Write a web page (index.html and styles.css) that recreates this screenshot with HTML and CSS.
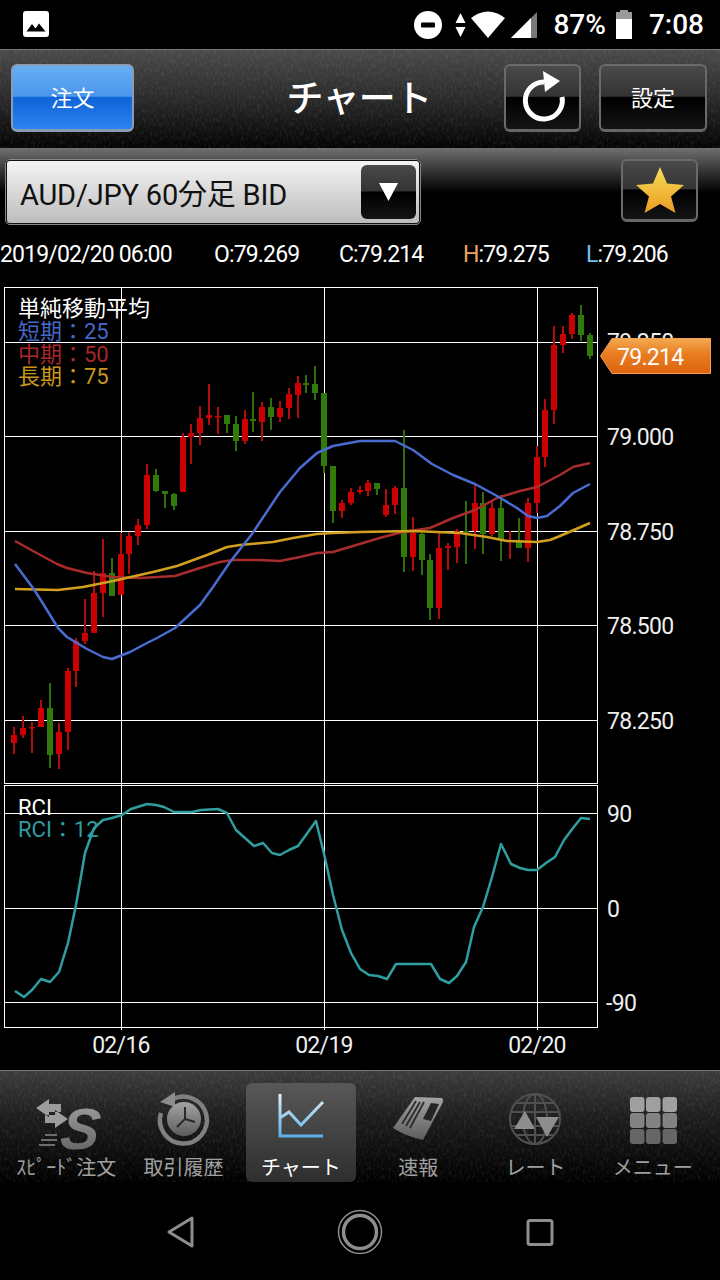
FILE: index.html
```html
<!DOCTYPE html>
<html lang="ja">
<head>
<meta charset="utf-8">
<title>チャート</title>
<link rel="stylesheet" href="styles.css">
</head>
<body>
<svg class="defs" width="0" height="0" aria-hidden="true">
  <defs>
    <filter id="grain" x="0" y="0" width="100%" height="100%">
      <feTurbulence type="fractalNoise" baseFrequency="0.45 0.22" numOctaves="3" seed="7"/>
      <feColorMatrix type="matrix" values="0 0 0 0 0.75  0 0 0 0 0.75  0 0 0 0 0.75  1.6 0 0 0 -0.72"/>
    </filter>
    <linearGradient id="grayA" x1="0" y1="0" x2="0" y2="1"><stop offset="0" stop-color="#a4a4a4"/><stop offset="1" stop-color="#5c5c5c"/></linearGradient>
    <linearGradient id="starFill" x1="0" y1="0" x2="0" y2="1"><stop offset="0" stop-color="#f6dc58"/><stop offset="1" stop-color="#eb9c22"/></linearGradient>
    <linearGradient id="tagFill" x1="0" y1="0" x2="0" y2="1"><stop offset="0" stop-color="#f3aa52"/><stop offset=".45" stop-color="#e97c20"/><stop offset="1" stop-color="#dd6410"/></linearGradient>
    <linearGradient id="chartIcon" gradientUnits="userSpaceOnUse" x1="0" y1="1094" x2="0" y2="1138"><stop offset="0" stop-color="#e6f0f8"/><stop offset="1" stop-color="#55aee8"/></linearGradient>
  </defs>
</svg>

<div class="status">
  <svg class="st-photo" viewBox="0 0 26 26"><rect width="26" height="26" rx="3" fill="#fff"/><path d="M3.500 20.500 9 13l3.500 4.500L16 12.500l6.500 8z" fill="#000"/></svg>
  <div class="status-right">
    <svg class="st-dnd" viewBox="0 0 28 28"><circle cx="14" cy="14" r="14" fill="#fff"/><rect x="7" y="11.500" width="14" height="5" rx="1" fill="#000"/></svg>
    <svg class="st-data" viewBox="0 0 11 24"><path d="M5.500 0 10.500 10H.5zM.5 14h10l-5 10z" fill="#fff"/></svg>
    <svg class="st-wifi" viewBox="0 0 34 27"><path d="M0 7Q17-6 34 7L17 27z" fill="#fff"/></svg>
    <svg class="st-signal" viewBox="0 0 26 26"><path d="M26 0V26H0z" fill="#7a7a7a"/><path d="M20 6V26H0z" fill="#fff"/></svg>
    <span class="st-pct">87%</span>
    <svg class="st-batt" viewBox="0 0 16 29"><path d="M4 0h8v2h4v8H0V2h4z" fill="#9a9a9a"/><path d="M0 9h16v20H0z" fill="#fff"/></svg>
    <span class="st-time">7:08</span>
  </div>
</div>

<header class="header">
  <svg class="grain" aria-hidden="true"><rect width="100%" height="100%" filter="url(#grain)"/></svg>
  <div class="head-left"><button class="btn btn-blue"><span class="btn-text">注文</span></button></div>
  <h1 class="title">チャート</h1>
  <div class="head-right">
    <button class="btn btn-dark btn-refresh">
      <svg class="refresh" viewBox="0 0 77 68"><path d="M40 19A18.500 18.500 0 1 0 58 34" fill="none" stroke="#fff" stroke-width="5"/><path d="M39 8 56 18 41 29z" fill="#fff"/></svg>
    </button>
    <button class="btn btn-dark btn-set"><span class="btn-text">設定</span></button>
  </div>
</header>

<section class="subbar">
  <div class="select">
    <span class="select-text">AUD/JPY 60分足 BID</span>
    <span class="select-btn"><svg class="select-arrow" viewBox="0 0 19 18"><path d="M0 0h19L9.500 18z" fill="#fff"/></svg></span>
  </div>
  <button class="btn btn-dark btn-star">
    <svg class="star" viewBox="0 0 48 46"><path d="M24 0 31 16.500 48 18 35 29.500 39.500 46 24 37 8.500 46 13 29.500 0 18 17 16.500z" fill="url(#starFill)"/></svg>
  </button>
</section>

<div class="info">
  <span>2019/02/20 06:00</span>
  <span>O:79.269</span>
  <span>C:79.214</span>
  <span><b class="hi">H</b>:79.275</span>
  <span><b class="lo">L</b>:79.206</span>
</div>

<main class="chart">
  <svg class="plot" viewBox="0 276 720 794">
    <g class="grid">
      <rect x="4.500" y="287.500" width="593" height="496"/>
      <rect x="4.500" y="785.500" width="593" height="242"/>
      <path d="M5 342.500H597M5 436.500H597M5 531.500H597M5 625.500H597M5 720.500H597M5 813.500H597M5 908.500H597M5 1002.500H597M121.500 288V1030M324.500 288V1030M537.500 288V1030"/>
    </g>
    <path class="wick-red" d="M14 727V754M23 716V738M32 722V753M41 700V727M59 723V769M68 668V750M76 638V687M85 599V644M94 571V633M103 539V617M121 533V595M129 532V574M138 519V545M147 464V529M183 433V492M191 424V464M200 406V445M209 384V425M218 407V434M245 410V444M262 402V441M280 401V422M289 388V419M298 376V418M342 500V518M351 488V505M360 486V494M368 480V496M386 489V517M395 486V514M413 517V571M439 532V619M448 543V570M457 529V563M475 485V549M492 500V536M510 531V559M528 498V562M537 446V513M545 399V467M554 326V424M563 326V353M572 313V339"/>
    <path class="body-red" d="M14 735V743M23 728V735M32 727V728.500M41 708V727M59 732V754M68 671V732M76 641V671M85 633V641M94 593V633M103 573V593M121 554V595M129 536V554M138 525V536M147 475V525M183 437V492M191 433V437M200 418V433M209 415V418M218 416V417.500M245 419V441M262 407V422M280 408V417M289 394V408M298 383V395M342 503V511M351 492V503M360 490V492M368 483V491M386 505V515M395 488V505M413 533V557M439 548V608M448 546V548M457 531V547M475 503V531M492 508V534M510 540V541.500M528 503V548M537 457V503M545 410V457M554 345V410M563 334V345M572 315V334"/>
    <path class="wick-green" d="M50 683V768M112 558V596M156 469V492M165 491V508M174 493V510M227 415V433M236 416V451M253 392V432M271 398V430M306 375V393M315 366V400M324 393V473M333 466V523M377 483V495M404 430V572M422 533V575M430 554V620M466 501V564M483 492V554M501 495V561M519 518V548M581 305V341M590 333V359"/>
    <path class="body-green" d="M50 708V755M112 573V596M156 475V491M165 491V494M174 494V506M227 415V424M236 424V441M253 419V421M271 407V417M306 383V385M315 384V393M324 393V466M333 466V511M377 483V489M404 488V557M422 534V560M430 560V608M466 531V532.500M483 503V534M501 508V539M519 540V548M581 315V335M590 335V356"/>
    <polyline class="ma-red" points="15,541 33,551 57,564 67,568 87,573 113,577 140,578 175,576 200,568 220,562 233,560 260,560 280,561 300,557 317,553 333,552 363,543 383,537 403,532 430,528 453,518 475,510 497,498 520,491 537,487 560,475 573,467 590,463"/>
    <polyline class="ma-yellow" points="15,589 58,590 83,587 113,581 153,572 177,566 207,555 227,547 240,545 273,542 293,538 317,534 333,533 360,532 413,531 437,532 460,533 487,537 507,541 537,542 550,540 560,536 590,523"/>
    <polyline class="ma-blue" points="15,564 33,588 42,602 58,628 67,637 87,649 103,657 112,659 130,652 147,643 157,638 175,628 200,605 213,587 230,562 252,534 280,492 300,468 317,453 333,446 360,441 395,441 413,450 432,464 453,475 475,484 497,496 517,508 528,516 537,518 547,516 560,506 573,493 590,484"/>
    <polyline class="rci-line" points="15,991 24,997 32,990 41,979 50,982 59,972 68,943 76,905 85,853 94,828 103,820 112,818 122,815 131,809 147,804 156,805 164,807 174,812 192,812 201,810 218,809 227,813 236,830 254,846 263,843 272,853 280,855 289,850 298,846 316,821 325,858 333,895 342,930 351,953 360,969 369,975 378,976 387,979 396,964 413,964 431,964 440,979 449,983 457,976 466,962 474,927 483,907 492,877 501,844 511,864 520,868 528,870 537,870 546,863 555,857 564,840 573,828 581,818 590,819"/>

    <text class="lab lab-white" x="18" y="316">単純移動平均</text>
    <text class="lab lab-blue" x="18" y="339">短期：25</text>
    <text class="lab lab-red" x="18" y="362">中期：50</text>
    <text class="lab lab-yellow" x="18" y="384">長期：75</text>
    <text class="lab lab-white" x="18" y="815">RCI</text>
    <text class="lab lab-teal" x="18" y="837">RCI：12</text>

    <text class="axis" x="607" y="350">79.250</text>
    <text class="axis" x="607" y="445">79.000</text>
    <text class="axis" x="607" y="540">78.750</text>
    <text class="axis" x="607" y="634">78.500</text>
    <text class="axis" x="607" y="729">78.250</text>
    <text class="axis" x="607" y="822">90</text>
    <text class="axis" x="607" y="917">0</text>
    <text class="axis" x="606" y="1011">-90</text>
    <text class="axis mid" x="121" y="1053">02/16</text>
    <text class="axis mid" x="324" y="1053">02/19</text>
    <text class="axis mid" x="537" y="1053">02/20</text>

    <path class="tag" d="M612 338.500H710.500V373.500H612L600.500 356z"/>
    <text class="axis tag-text" x="617" y="365">79.214</text>
  </svg>
</main>

<nav class="tabbar">
  <svg class="grain" aria-hidden="true"><rect width="100%" height="100%" filter="url(#grain)"/></svg>
  <div class="tab">
    <svg class="tab-icon" viewBox="12 1083 110 66">
      <path d="M37 1108 50 1099V1104H62V1112H50V1117zM69 1119 56 1110V1115H46V1123H56V1128z" fill="#9c9c9c"/>
      <path d="M46 1135H58M42 1140H58M40 1145H56" stroke="#6c6c6c" stroke-width="2" fill="none"/>
      <text class="s-mark" transform="translate(60 1149) skewX(-7)">S</text>
    </svg>
    <span class="tab-label">ｽﾋﾟｰﾄﾞ注文</span>
  </div>
  <div class="tab">
    <svg class="tab-icon" viewBox="129 1083 110 66">
      <path d="M174 1099A23.500 23.500 0 1 1 162 1113" fill="none" stroke="#808080" stroke-width="4.500"/>
      <path d="M176 1092V1107L161 1102z" fill="#8c8c8c"/>
      <circle cx="185" cy="1119" r="17" fill="url(#grayA)"/>
      <path d="M186 1107V1119L196 1122M186 1119 178 1127" fill="none" stroke="#2a2a2a" stroke-width="2"/>
    </svg>
    <span class="tab-label">取引履歴</span>
  </div>
  <div class="tab tab-active">
    <svg class="tab-icon" viewBox="246 1083 110 66">
      <path d="M280 1094V1136H323M280 1118 289 1112 301 1125 323 1102" fill="none" stroke="url(#chartIcon)" stroke-width="3"/>
    </svg>
    <span class="tab-label">チャート</span>
  </div>
  <div class="tab">
    <svg class="tab-icon" viewBox="363 1083 110 66">
      <path d="M415 1097 442 1098Q444 1100 442 1104L423 1140Q405 1136 393 1128z" fill="url(#grayA)"/>
      <path d="M416 1101 402 1124M420 1102 406 1126M424 1102 410 1128" stroke="#2c2c2c" stroke-width="1.800"/>
      <path d="M431 1103 439 1104 431 1121 423 1119z" fill="#242424"/>
    </svg>
    <span class="tab-label">速報</span>
  </div>
  <div class="tab">
    <svg class="tab-icon" viewBox="481 1083 110 66">
      <g fill="none" stroke="#505050" stroke-width="2">
        <circle cx="536" cy="1119" r="25"/>
        <ellipse cx="536" cy="1119" rx="12" ry="25"/>
        <path d="M536 1094V1144M512 1112H560M512 1126H560M517 1103H555M517 1135H555"/>
      </g>
      <path d="M526 1111 536 1129H515z" fill="#8e8e8e"/>
      <path d="M537 1117H560L548 1137z" fill="#8e8e8e"/>
    </svg>
    <span class="tab-label">レート</span>
  </div>
  <div class="tab">
    <svg class="tab-icon" viewBox="597 1083 110 66">
      <g>
        <rect x="629" y="1097" width="14.500" height="15" rx="3" fill="#a0a0a0"/><rect x="645" y="1097" width="14.500" height="15" rx="3" fill="#a0a0a0"/><rect x="661.500" y="1097" width="14.500" height="15" rx="3" fill="#a0a0a0"/>
        <rect x="629" y="1113" width="14.500" height="15" rx="3" fill="#828282"/><rect x="645" y="1113" width="14.500" height="15" rx="3" fill="#828282"/><rect x="661.500" y="1113" width="14.500" height="15" rx="3" fill="#828282"/>
        <rect x="629" y="1129" width="14.500" height="15" rx="3" fill="#666"/><rect x="645" y="1129" width="14.500" height="15" rx="3" fill="#666"/><rect x="661.500" y="1129" width="14.500" height="15" rx="3" fill="#666"/>
      </g>
    </svg>
    <span class="tab-label">メニュー</span>
  </div>
</nav>

<footer class="sysnav">
  <svg class="sys-icon" viewBox="0 0 720 98">
    <path d="M169 50 192 36V64z" fill="none" stroke="#8e8e8e" stroke-width="3" stroke-linejoin="round"/>
    <circle cx="360" cy="50" r="21.500" fill="none" stroke="#8e8e8e" stroke-width="1.500"/>
    <circle cx="360" cy="50" r="16.500" fill="none" stroke="#8e8e8e" stroke-width="3.500"/>
    <rect x="528" y="38.500" width="24" height="24" rx="2" fill="none" stroke="#8e8e8e" stroke-width="3"/>
  </svg>
</footer>
</body>
</html>
```

FILE: styles.css
```css
* { box-sizing: border-box; }
html, body { margin: 0; padding: 0; background: #000; }
body {
  width: 720px;
  height: 1280px;
  overflow: hidden;
  color: #fff;
  font-family: Roboto, "Noto Sans CJK JP", sans-serif;
  display: flex;
  flex-direction: column;
}
.defs { position: absolute; }

/* status bar */
.status {
  height: 49px;
  flex: none;
  display: flex;
  align-items: center;
  justify-content: space-between;
  padding: 0 16px 0 23px;
  background: #000;
}
.st-photo { width: 26px; height: 26px; margin-top: -1px; }
.status-right { display: flex; align-items: center; }
.st-dnd { width: 28px; height: 28px; margin-right: 13px; }
.st-data { width: 11px; height: 24px; margin-right: 5px; }
.st-wifi { width: 34px; height: 27px; margin-right: 6px; }
.st-signal { width: 26px; height: 26px; margin-right: 16px; }
.st-pct, .st-time { font-size: 28px; font-weight: 500; line-height: 49px; }
.st-batt { width: 16px; height: 29px; margin: 0 17px 0 10px; }

/* header */
.header {
  position: relative;
  height: 99px;
  flex: none;
  display: grid;
  grid-template-columns: 1fr auto 1fr;
  align-items: center;
  padding: 0 13px 3px 11px;
  border-top: 1px solid #7a7a7a;
  background: linear-gradient(#4a4a4a, #2a2a2a 50%, #050505 98%);
}
.grain { position: absolute; left: 0; top: 0; width: 100%; height: 100%; opacity: .14; pointer-events: none; }
.head-left, .head-right { position: relative; display: flex; }
.head-right { justify-content: flex-end; gap: 18px; }
.title {
  position: relative;
  margin: 0;
  padding-bottom: 3px;
  font-size: 37px;
  font-weight: 500;
  letter-spacing: -.6px;
  font-family: "Noto Sans CJK JP", sans-serif;
}

.btn {
  display: flex;
  align-items: center;
  justify-content: center;
  padding: 0;
  color: #fff;
  font-family: "Noto Sans CJK JP", sans-serif;
  font-size: 22px;
  border-radius: 6px;
  height: 68px;
}
.btn-text { padding-bottom: 3px; }
.btn-blue {
  width: 123px;
  border: 2px solid #8a9cb4;
  border-bottom-width: 3px;
  background: linear-gradient(#67aff2, #4b96ec 48%, #0f64d8 50%, #2b83ee 100%);
}
.btn-dark {
  border: 2px solid #6a6a6a;
  border-bottom: 3px solid #666;
  background: linear-gradient(#4a4a4a, #333 48%, #000 50%, #141414 100%);
}
.btn-refresh { width: 77px; }
.btn-set { width: 108px; }
.refresh { width: 77px; height: 68px; flex: none; }

/* sub bar */
.subbar {
  height: 84px;
  flex: none;
  display: flex;
  align-items: flex-start;
  padding: 11px 22px 0 5px;
  justify-content: space-between;
  background: linear-gradient(#707070, #2a2a2a 60%, #000) no-repeat top / 100% 45px;
}
.select {
  width: 416px;
  height: 66px;
  display: flex;
  align-items: center;
  justify-content: space-between;
  padding: 0 3px 0 13px;
  border: 2px solid #111;
  outline: 1px solid #888;
  outline-offset: -1px;
  border-radius: 5px;
  background: linear-gradient(#f4f4f4, #d8d8d8 50%, #bdbdbd);
}
.select-text { color: #111; font-size: 29px; letter-spacing: -.2px; font-family: Roboto, "Noto Sans CJK JP", sans-serif; }
.select-btn {
  width: 55px;
  height: 54px;
  display: flex;
  align-items: center;
  justify-content: center;
  border-radius: 6px;
  background: linear-gradient(#4a4a4a, #333 48%, #000 50%, #141414 100%);
}
.select-arrow { width: 19px; height: 18px; }
.btn-star { width: 77px; height: 63px; }
.star { width: 48px; height: 46px; }

/* info row */
.info {
  height: 44px;
  flex: none;
  display: grid;
  grid-template-columns: 214px 125px 124px 123px 1fr;
  align-items: center;
  font-size: 23px;
  letter-spacing: -.85px;
}
.info b { font-weight: 400; }
.hi { color: #f0a060; }
.lo { color: #70c0f0; }

/* chart */
.chart { height: 794px; flex: none; }
.plot { display: block; width: 720px; height: 794px; }
.grid rect, .grid path { fill: none; stroke: #fff; stroke-width: 1; }
.wick-red, .body-red, .wick-green, .body-green { fill: none; }
.wick-red { stroke: #b00c0c; stroke-width: 2; }
.body-red { stroke: #cc0000; stroke-width: 6; }
.wick-green { stroke: #2f6e0c; stroke-width: 2; }
.body-green { stroke: #2f7a08; stroke-width: 6; }
.ma-red, .ma-yellow, .ma-blue, .rci-line { fill: none; stroke-width: 2.500; stroke-linejoin: round; }
.ma-red { stroke: #a82c2c; }
.ma-yellow { stroke: #d2a01e; }
.ma-blue { stroke: #4a6cd0; }
.rci-line { stroke: #2f9ea0; }
.lab { font-size: 22px; font-family: Roboto, "Noto Sans CJK JP", sans-serif; }
.lab-white { fill: #fff; }
.lab-blue { fill: #4668c8; }
.lab-red { fill: #a82828; }
.lab-yellow { fill: #c8961e; }
.lab-teal { fill: #2f9ea0; }
.axis { fill: #eee; font-size: 23px; letter-spacing: -.7px; font-family: Roboto, sans-serif; }
.mid { text-anchor: middle; }
.tag { fill: url(#tagFill); stroke: #f0a050; stroke-width: 1; }
.tag-text { fill: #fff; }

/* tab bar */
.tabbar {
  position: relative;
  height: 112px;
  flex: none;
  display: grid;
  grid-template-columns: repeat(6, 1fr);
  padding: 12px 8.500px 0 7.500px;
  border-top: 1px solid #777;
  background: linear-gradient(#3c3c3c, #1e1e1e 40%, #000);
}
.tab {
  position: relative;
  display: flex;
  flex-direction: column;
  align-items: center;
  height: 99px;
  margin: 0 3.500px;
  border-radius: 6px;
}
.tab-active { background: linear-gradient(#585858, #2e2e2e); }
.tab-icon { width: 110px; height: 66px; display: block; flex: none; overflow: visible; }
.tab-label {
  font-size: 20px;
  line-height: 36px;
  color: #a0a0a0;
  white-space: nowrap;
  font-family: "Noto Sans CJK JP", sans-serif;
}
.tab-active .tab-label { color: #fff; }
.s-mark { font: italic 700 58px "Liberation Sans", sans-serif; fill: url(#grayA); }

/* system nav */
.sysnav { flex: 1; background: #000; }
.sys-icon { display: block; width: 720px; height: 98px; }
```
